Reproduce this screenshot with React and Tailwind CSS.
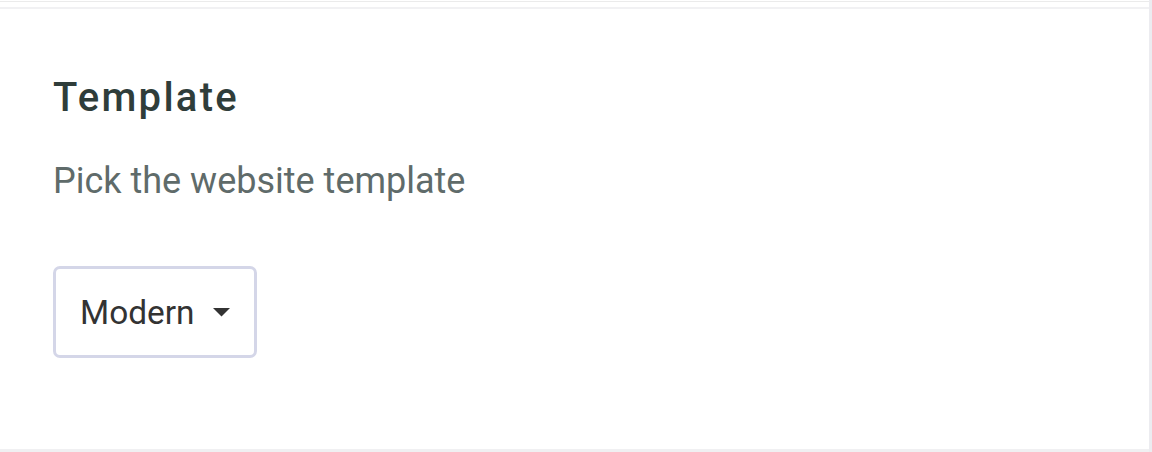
export default function App() {
  return (
    <div className="flex w-[1152px] h-[452px] bg-white" style={{ fontFamily: "Roboto, 'Noto Sans', sans-serif" }}>
      <div className="flex-1 flex flex-col">
        <div className="h-[2px] border-b border-[#ebebeb] bg-white" />
        <div className="h-[5px] bg-white" />
        <div className="h-[2px] bg-[#f1f1f3]" />
        <div className="flex-1 bg-white pl-[53px] pt-[69px]">
          <h2 className="text-[40px] leading-[40px] font-medium tracking-[0.057em] text-[#2f3d3a]">Template</h2>
          <p className="mt-[45px] text-[36px] leading-[36px] text-[#5f6b6a]">Pick the website template</p>
          <div className="mt-[67px]">
            <button className="inline-flex items-center h-[92px] pl-[24px] pr-[24px] border-[3px] border-[#d4d6e8] rounded-[7px] bg-white">
              <span className="text-[33.4px] leading-[34px] text-[#333333] pt-[2px]">Modern</span>
              <svg className="ml-[18px]" width="17" height="9" viewBox="0 0 17 9">
                <path d="M0 0 L17 0 L8.5 8.5 Z" fill="#333333" />
              </svg>
            </button>
          </div>
        </div>
        <div className="h-[3px] bg-[#f0f0f2]" />
      </div>
      <div className="w-[3px] bg-[#ececf0]" />
    </div>
  );
}
